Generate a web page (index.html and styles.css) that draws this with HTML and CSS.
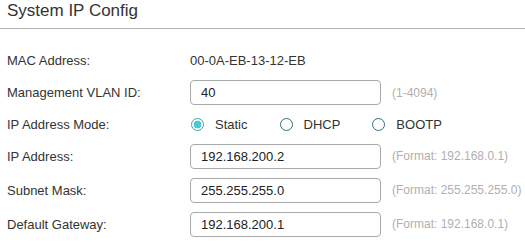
FILE: index.html
```html
<!DOCTYPE html>
<html lang="en">
<head>
    <meta charset="UTF-8">
    <meta name="viewport" content="width=device-width, initial-scale=1.0">
    <title>System IP Config</title>
    <link rel="stylesheet" href="styles.css">
</head>
<body>
    <div class="panel">
        <h1 class="panel-title">System IP Config</h1>
        <div class="form">
            <div class="row row-mac">
                <span class="label">MAC Address:</span>
                <span class="value">00-0A-EB-13-12-EB</span>
            </div>
            <div class="row row-vlan">
                <span class="label">Management VLAN ID:</span>
                <input class="field" type="text" value="40">
                <span class="hint">(1-4094)</span>
            </div>
            <div class="row row-mode">
                <span class="label">IP Address Mode:</span>
                <div class="radios">
                    <label class="radio checked"><span class="dot"></span>Static</label>
                    <label class="radio"><span class="dot"></span>DHCP</label>
                    <label class="radio"><span class="dot"></span>BOOTP</label>
                </div>
            </div>
            <div class="row">
                <span class="label">IP Address:</span>
                <input class="field" type="text" value="192.168.200.2">
                <span class="hint">(Format: 192.168.0.1)</span>
            </div>
            <div class="row">
                <span class="label">Subnet Mask:</span>
                <input class="field" type="text" value="255.255.255.0">
                <span class="hint">(Format: 255.255.255.0)</span>
            </div>
            <div class="row">
                <span class="label">Default Gateway:</span>
                <input class="field" type="text" value="192.168.200.1">
                <span class="hint">(Format: 192.168.0.1)</span>
            </div>
        </div>
    </div>
</body>
</html>
```

FILE: styles.css
```css
body {
    margin: 0;
    background: #ffffff;
    font-family: 'Liberation Sans', Arial, sans-serif;
    color: #333333;
}

.panel {
    width: 525px;
}

.panel-title {
    margin: 0;
    height: 29px;
    padding-left: 7px;
    box-sizing: border-box;
    border-bottom: 1px solid #b4b4b4;
    font-size: 17px;
    font-weight: normal;
    line-height: 22px;
    color: #333333;
}

.form {
    padding: 15px 0 0 7px;
}

.row {
    display: flex;
    align-items: center;
    height: 34px;
    font-size: 13px;
}

.row-mac {
    height: 32px;
}

.row-vlan {
    height: 33px;
}

.row-mode {
    height: 30px;
}

.label {
    width: 183px;
    flex-shrink: 0;
    color: #333333;
}

.value {
    color: #333333;
}

.field {
    width: 191px;
    height: 25px;
    box-sizing: border-box;
    padding: 0 10px;
    border: 1px solid #a9a9a9;
    border-radius: 4px;
    font-family: 'Liberation Sans', Arial, sans-serif;
    font-size: 13px;
    color: #222222;
    outline: none;
}

.hint {
    margin-left: 11px;
    font-size: 12px;
    color: #b0b0b0;
}

.radios {
    display: flex;
    gap: 32px;
    padding-left: 1px;
}

.radio {
    display: flex;
    align-items: center;
    color: #333333;
}

.dot {
    width: 13px;
    height: 13px;
    box-sizing: border-box;
    border: 1.5px solid #2f6f76;
    border-radius: 50%;
    margin-right: 11px;
    background: #ffffff;
}

.radio.checked .dot {
    border-color: #3aa6b1;
    background: radial-gradient(circle, #4fc8d3 0 3.6px, #ffffff 4.2px);
}
```
